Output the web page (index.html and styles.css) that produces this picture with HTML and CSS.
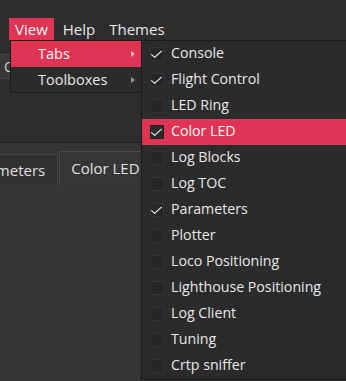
FILE: index.html
```html
<!DOCTYPE html>
<html lang="en">
<head>
    <meta charset="UTF-8">
    <title>Crazyflie client - View menu</title>
    <link rel="stylesheet" href="styles.css">
</head>
<body>
    <div class="app">
        <div class="menubar">
            <span class="menu-title active">View</span>
            <span class="menu-title">Help</span>
            <span class="menu-title">Themes</span>
        </div>

        <div class="toolbar">
            <button class="tool-btn">Connect</button>
        </div>

        <div class="tabbar">
            <div class="tab">Parameters</div>
            <div class="tab selected">Color LED</div>
        </div>
        <div class="tab-page"></div>

        <!-- View menu -->
        <div class="menu view-menu">
            <div class="menu-item highlight">Tabs <span class="arrow"></span></div>
            <div class="menu-item">Toolboxes <span class="arrow"></span></div>
        </div>

        <!-- Tabs submenu -->
        <div class="menu tabs-menu">
            <div class="check-item"><span class="box checked"></span><span class="label">Console</span></div>
            <div class="check-item"><span class="box checked"></span><span class="label">Flight Control</span></div>
            <div class="check-item"><span class="box"></span><span class="label">LED Ring</span></div>
            <div class="check-item highlight"><span class="box checked"></span><span class="label">Color LED</span></div>
            <div class="check-item"><span class="box"></span><span class="label">Log Blocks</span></div>
            <div class="check-item"><span class="box"></span><span class="label">Log TOC</span></div>
            <div class="check-item"><span class="box checked"></span><span class="label">Parameters</span></div>
            <div class="check-item"><span class="box"></span><span class="label">Plotter</span></div>
            <div class="check-item"><span class="box"></span><span class="label">Loco Positioning</span></div>
            <div class="check-item"><span class="box"></span><span class="label">Lighthouse Positioning</span></div>
            <div class="check-item"><span class="box"></span><span class="label">Log Client</span></div>
            <div class="check-item"><span class="box"></span><span class="label">Tuning</span></div>
            <div class="check-item"><span class="box"></span><span class="label">Crtp sniffer</span></div>
        </div>
    </div>
</body>
</html>
```

FILE: styles.css
```css
body {
    margin: 0;
    padding: 0;
    background-color: #353535;
    font-family: "Open Sans", "Noto Sans", sans-serif;
    font-size: 14px;
    color: #e8e8e8;
}

.app {
    position: relative;
    width: 346px;
    height: 381px;
    overflow: hidden;
    display: flex;
    flex-direction: column;
}

.menubar {
    height: 40px;
    background-color: #2d2d2d;
    display: flex;
    align-items: flex-end;
    padding-left: 9px;
    box-sizing: border-box;
}

.menu-title {
    height: 22px;
    line-height: 22px;
    padding: 0 5px;
    margin-right: 4px;
    font-size: 15px;
}

.menu-title.active {
    padding: 0 6px;
    background-color: #df3453;
    color: #f4f4f4;
}

.toolbar {
    height: 103px;
    background-color: #2d2d2d;
    border-bottom: 1px solid #1f1f1f;
    padding-top: 14px;
    box-sizing: border-box;
}

.tool-btn {
    height: 25px;
    width: 90px;
    margin-left: -1px;
    padding: 0 0 1px 4px;
    text-align: left;
    background-color: #383838;
    border: 1px solid #454545;
    color: #d0d0d0;
    font-family: inherit;
    font-size: 14px;
}

.tabbar {
    display: flex;
    align-items: flex-end;
    height: 42px;
    margin-left: -50px;
}

.tab {
    height: 31px;
    line-height: 30px;
    padding: 0 12px 0 13px;
    background-color: #313131;
    border: 1px solid #484848;
    border-bottom: none;
    box-sizing: border-box;
    color: #e0e0e0;
    font-size: 15px;
}

.tab.selected {
    height: 34px;
    line-height: 33px;
    margin-left: 1px;
    background-color: #363636;
    padding-left: 11px;
    padding-right: 20px;
}

.tab-page {
    flex: 1;
    background-color: #353535;
}

.menu {
    position: absolute;
    background-color: #2b2b2b;
    border: 1px solid #1b1b1b;
    box-sizing: border-box;
}

.view-menu {
    left: 10px;
    top: 40px;
    width: 132px;
    height: 53px;
}

.menu-item {
    position: relative;
    height: 26px;
    line-height: 25px;
    padding-left: 27px;
    font-size: 14.5px;
}

.highlight {
    background-color: #df3453;
    color: #fafafa;
}

.arrow {
    position: absolute;
    right: 6px;
    top: 10px;
    width: 0;
    height: 0;
    border-top: 3.5px solid transparent;
    border-bottom: 3.5px solid transparent;
    border-left: 4px solid #9a9a9a;
}

.highlight .arrow {
    border-left-color: #f2b8c3;
}

.tabs-menu {
    left: 141px;
    top: 40px;
    width: 215px;
    height: 340px;
}

.check-item {
    display: flex;
    align-items: center;
    height: 26px;
    padding-left: 8px;
    font-size: 14.2px;
}

.label {
    padding-bottom: 3px;
}

.box {
    width: 14px;
    height: 14px;
    margin-right: 7px;
    background-color: #262626;
    border: 1px solid #333333;
    box-sizing: border-box;
    flex-shrink: 0;
    position: relative;
}

.check-item.highlight .box {
    background-color: #2a2a2a;
    border-color: #222;
}

.box.checked::after {
    content: "";
    position: absolute;
    left: 3px;
    top: 0;
    width: 4px;
    height: 9px;
    border-right: 1.8px solid #f0f0f0;
    border-bottom: 1.8px solid #f0f0f0;
    transform: rotate(40deg) skewX(-8deg);
}
```
